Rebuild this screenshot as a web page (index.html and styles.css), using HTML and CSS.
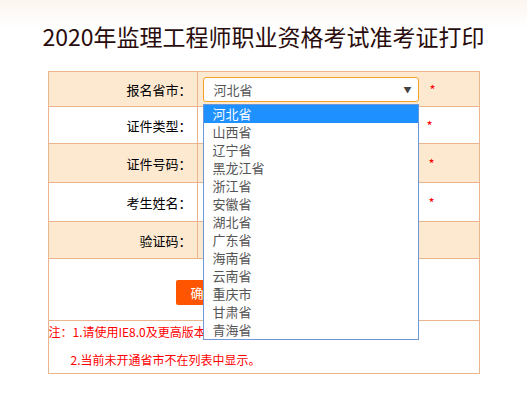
FILE: index.html
```html
<!DOCTYPE html>
<html lang="zh-CN">
<head>
<meta charset="utf-8">
<title>准考证打印</title>
<link rel="stylesheet" href="styles.css">
</head>
<body>

<h1 class="title">2020年监理工程师职业资格考试准考证打印</h1>

<table class="form">
	<tr class="row row-a r1">
		<td class="label">报名省市：</td>
		<td class="field">
			<div class="pick">
				<div class="select">河北省<span class="arrow">&#9660;</span></div>
				<ul class="options">
					<li class="on">河北省</li>
					<li>山西省</li>
					<li>辽宁省</li>
					<li>黑龙江省</li>
					<li>浙江省</li>
					<li>安徽省</li>
					<li>湖北省</li>
					<li>广东省</li>
					<li>海南省</li>
					<li>云南省</li>
					<li>重庆市</li>
					<li>甘肃省</li>
					<li>青海省</li>
				</ul>
			</div>
			<span class="star">*</span>
		</td>
	</tr>
	<tr class="row r2">
		<td class="label">证件类型：</td>
		<td class="field"><div class="input"></div><span class="star">*</span></td>
	</tr>
	<tr class="row row-a r3">
		<td class="label">证件号码：</td>
		<td class="field"><div class="input"></div><span class="star star-far">*</span></td>
	</tr>
	<tr class="row r4">
		<td class="label">考生姓名：</td>
		<td class="field"><div class="input"></div><span class="star star-far">*</span></td>
	</tr>
	<tr class="row row-a r5">
		<td class="label">验证码：</td>
		<td class="field"></td>
	</tr>
	<tr class="row r6">
		<td class="actions" colspan="2"><button class="btn">确定打印</button></td>
	</tr>
	<tr class="row r7">
		<td class="notes" colspan="2">
			<p>注：1.请使用IE8.0及更高版本浏览器打印。</p>
			<p class="indent">2.当前未开通省市不在列表中显示。</p>
		</td>
	</tr>
</table>

</body>
</html>
```

FILE: styles.css
```css
html {
	background: #fff;
}

body {
	margin: 0;
	background: linear-gradient(#fcf5ef, #ffffff) no-repeat;
	background-size: 100% 28px;
	font-family: "Noto Sans CJK SC", sans-serif;
	color: #000;
}

.title {
	margin: 0;
	height: 71px;
	line-height: 72px;
	font-size: 23px;
	font-weight: normal;
	color: #2a0c0c;
	text-align: center;
}

.form {
	width: 432px;
	margin: 0 auto;
	border-collapse: collapse;
	font-size: 13px;
}

.form td {
	border: 1px solid #ebb58e;
	padding: 0;
}

.row-a td {
	background: #fde9d0;
}

.r1 { height: 35px; }
.r2 { height: 37px; }
.r3 { height: 39px; }
.r4 { height: 39px; }
.r5 { height: 37px; }
.r6 { height: 62px; }
.r7 { height: 53px; }

.label {
	width: 143px;
	text-align: right;
	padding-right: 5px !important;
}

.field {
	padding-left: 5px !important;
	white-space: nowrap;
}

.pick {
	position: relative;
	display: inline-block;
	vertical-align: middle;
}

.select {
	width: 204px;
	height: 23px;
	line-height: 23px;
	padding-left: 10px;
	border: 1px solid #f6a12a;
	border-radius: 3px;
	background: #fff;
	color: #555;
	position: relative;
}

.arrow {
	position: absolute;
	right: 6px;
	top: 0;
	font-size: 8px;
	color: #444;
}

.options {
	position: absolute;
	left: 0;
	top: 27px;
	width: 214px;
	margin: 0;
	padding: 0;
	list-style: none;
	background: #fff;
	border: 1px solid #6f96d6;
	z-index: 10;
}

.options li {
	height: 18px;
	line-height: 18px;
	padding-left: 9px;
	color: #555;
	font-size: 13px;
}

.options li.on {
	background: #1e90ff;
	color: #fff;
}

.input {
	display: inline-block;
	vertical-align: middle;
	width: 214px;
	height: 22px;
	border: 1px solid #b8c8dd;
	background: #fff;
}

.star {
	display: inline-block;
	vertical-align: middle;
	margin-left: 8px;
	color: #f00;
	font-size: 13px;
}

.star-far {
	margin-left: 10px;
}

.actions {
	text-align: center;
}

.btn {
	width: 176px;
	height: 25px;
	padding: 0 0 0 15px;
	border: none;
	border-radius: 2px;
	background: #ff5500;
	color: #fff;
	font-family: "Noto Sans CJK SC", sans-serif;
	font-size: 13px;
	text-align: left;
	margin-top: 6px;
}

.notes {
	color: #f00;
	font-size: 12px;
	vertical-align: top;
}

.notes p {
	margin: 2px 0 0;
	line-height: 18px;
}

.notes p.indent {
	margin-top: 10px;
	padding-left: 22px;
}
```
